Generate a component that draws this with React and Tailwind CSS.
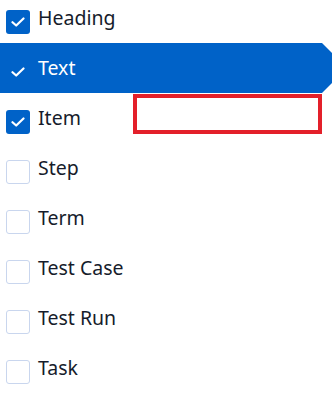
const items = [
  { label: 'Heading', checked: true },
  { label: 'Text', checked: true, active: true },
  { label: 'Item', checked: true },
  { label: 'Step', checked: false },
  { label: 'Term', checked: false },
  { label: 'Test Case', checked: false },
  { label: 'Test Run', checked: false },
  { label: 'Task', checked: false },
];

const Check = () => (
  <svg width="14" height="10" viewBox="0 0 14 10" fill="none">
    <path d="M1.5 5.2 L5.2 8.5 L12.5 1.5" stroke="white" strokeWidth="2.2" strokeLinecap="round" strokeLinejoin="round" />
  </svg>
);

const Row = ({ label, checked, active }) => (
  <li
    className={
      'flex h-[50px] items-center gap-2 pl-[6px] ' +
      (active
        ? 'bg-[#0062c8] text-white [clip-path:polygon(0_0,calc(100%-10px)_0,100%_10px,100%_calc(100%-10px),calc(100%-10px)_100%,0_100%)]'
        : 'text-[#161c2b]')
    }
  >
    <span
      className={
        'mt-2 flex h-6 w-6 shrink-0 items-center justify-center rounded-[3px] ' +
        (checked ? 'bg-[#0062c8]' : 'border border-[#c9d6ee] bg-white')
      }
    >
      {checked && <Check />}
    </span>
    <span className="text-[19.5px] leading-none">{label}</span>
  </li>
);

export default function App() {
  return (
    <div className="relative h-[407px] w-[332px] overflow-hidden bg-white font-['Noto_Sans',sans-serif]">
      <ul className="-mt-[7px]">
        {items.map((item) => (
          <Row key={item.label} {...item} />
        ))}
      </ul>
      <div className="absolute left-[133px] top-[94px] h-[40px] w-[189px] border-4 border-[#e3202a]" />
    </div>
  );
}
